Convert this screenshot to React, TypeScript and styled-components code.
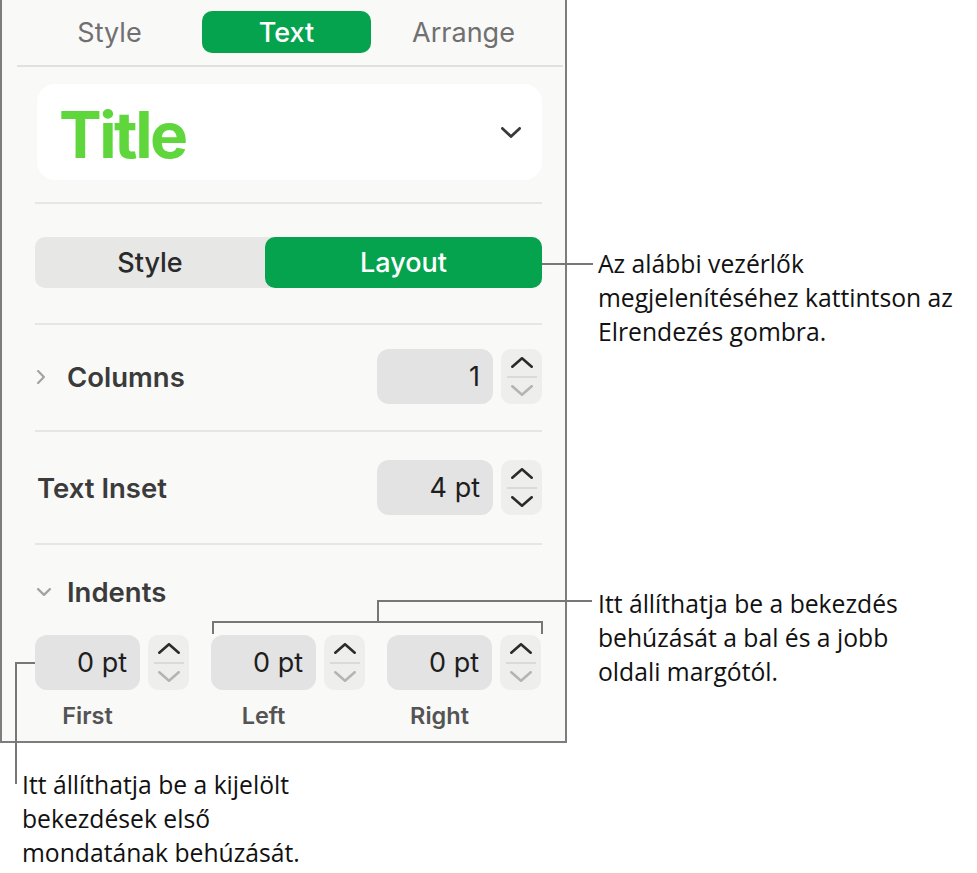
import React from "react";
import styled, { createGlobalStyle } from "styled-components";

const GlobalStyle = createGlobalStyle`
  * {
    box-sizing: border-box;
  }
  body {
    margin: 0;
    background: #ffffff;
    font-family: Inter, "Liberation Sans", sans-serif;
  }
`;

const colorGreen = "#06a34f";

const Canvas = styled.div`
  position: relative;
  width: 977px;
  height: 873px;
  overflow: hidden;
`;

const TopRow = styled.div`
  display: flex;
  align-items: flex-start;
`;

const Panel = styled.div`
  width: 567px;
  height: 743px;
  flex-shrink: 0;
  background: #f9f9f8;
  border: 2px solid #7d7d7d;
  border-top: none;
  display: flex;
  flex-direction: column;
`;

const TabBar = styled.div`
  display: grid;
  grid-template-columns: repeat(3, 177px);
  padding: 11px 0 0 19px;
  height: 65px;
`;

const Tab = styled.div<{ $active?: boolean }>`
  height: 42px;
  margin: 0 4px;
  border-radius: 10px;
  display: flex;
  align-items: center;
  justify-content: center;
  font-size: 27px;
  font-weight: ${({ $active }) => ($active ? 500 : 400)};
  color: ${({ $active }) => ($active ? "#ffffff" : "#707070")};
  background: ${({ $active }) => ($active ? colorGreen : "transparent")};
`;

const TabLine = styled.div`
  height: 2px;
  background: #e1e1e1;
  margin: 0 2px 0 15px;
`;

const Body = styled.div`
  display: flex;
  flex-direction: column;
  padding: 0 23px 0 33px;
`;

const Divider = styled.div<{ $top: number }>`
  height: 2px;
  background: #e6e6e5;
  margin-top: ${({ $top }) => $top}px;
`;

const TitleCard = styled.div`
  margin-top: 17px;
  margin-left: 2px;
  height: 96px;
  background: #ffffff;
  border-radius: 18px;
  display: flex;
  align-items: center;
  justify-content: space-between;
  padding: 0 21px 0 22px;
`;

const TitleText = styled.div`
  font-size: 64px;
  font-weight: 700;
  color: #5fd63c;
  letter-spacing: -2.5px;
  padding-top: 4px;
`;

const Segmented = styled.div`
  margin-top: 33px;
  height: 51px;
  display: grid;
  grid-template-columns: 230px 1fr;
  background: #e7e7e6;
  border-radius: 10px;
`;

const Segment = styled.div<{ $active?: boolean }>`
  display: flex;
  align-items: center;
  justify-content: center;
  border-radius: 10px;
  font-size: 27px;
  font-weight: 500;
  color: ${({ $active }) => ($active ? "#ffffff" : "#2a2a2a")};
  background: ${({ $active }) => ($active ? colorGreen : "transparent")};
`;

const Row = styled.div<{ $top: number }>`
  margin-top: ${({ $top }) => $top}px;
  height: 55px;
  display: flex;
  align-items: center;
`;

const RowLabel = styled.div`
  flex: 1;
  display: flex;
  align-items: center;
  font-size: 27.5px;
  font-weight: 600;
  color: #3b3b3b;
  padding-left: 2px;
`;

const Disclosure = styled.span`
  width: 30px;
  display: inline-flex;
  align-items: center;
`;

const StepGroup = styled.div`
  display: flex;
  gap: 8px;
`;

const Field = styled.div<{ $width: number }>`
  width: ${({ $width }) => $width}px;
  height: 55px;
  border-radius: 12px;
  background: #e3e3e3;
  display: flex;
  align-items: center;
  justify-content: flex-end;
  padding-right: 13px;
  font-size: 27px;
  color: #1e1e1e;
`;

const Stepper = styled.div`
  width: 41px;
  height: 55px;
  border-radius: 10px;
  background: #eeeeed;
  display: flex;
  flex-direction: column;
  align-items: center;
  justify-content: center;
`;

const StepHalf = styled.div`
  height: 26px;
  display: flex;
  align-items: center;
  justify-content: center;
`;

const StepRule = styled.div`
  width: 30px;
  height: 2px;
  background: #dadad9;
`;

const IndentsHeader = styled.div`
  margin-top: 32px;
  height: 30px;
  display: flex;
  align-items: center;
  font-size: 27.5px;
  font-weight: 600;
  color: #3b3b3b;
  padding-left: 2px;
`;

const IndentGrid = styled.div`
  margin-top: 28px;
  display: grid;
  grid-template-columns: repeat(3, 155px);
  column-gap: 21px;
`;

const IndentCell = styled.div`
  display: flex;
  flex-direction: column;
  gap: 13px;
`;

const IndentLabel = styled.div`
  width: 105px;
  text-align: center;
  font-size: 23.5px;
  font-weight: 600;
  color: #545454;
  line-height: 26px;
`;

const CalloutColumn = styled.div`
  padding-left: 31px;
  display: flex;
  flex-direction: column;
`;

const Callout = styled.div<{ $top: number; $left?: number }>`
  margin-top: ${({ $top }) => $top}px;
  margin-left: ${({ $left }) => $left ?? 0}px;
  font-family: "Open Sans", "Noto Sans", sans-serif;
  font-size: 24.7px;
  line-height: 34px;
  color: #111111;
  white-space: nowrap;
`;

const Leaders = styled.svg`
  position: absolute;
  inset: 0;
  pointer-events: none;
`;

type ChevronProps = {
  readonly dir: "up" | "down" | "right";
  readonly color: string;
  readonly w?: number;
  readonly h?: number;
  readonly stroke?: number;
};

const Chevron = ({ dir, color, w = 22, h = 11, stroke = 2.6 }: ChevronProps) => {
  const s = stroke / 2;
  let points = "";
  if (dir === "up") points = `${s},${h - s} ${w / 2},${s} ${w - s},${h - s}`;
  if (dir === "down") points = `${s},${s} ${w / 2},${h - s} ${w - s},${s}`;
  if (dir === "right") points = `${s},${s} ${w - s},${h / 2} ${s},${h - s}`;
  return (
    <svg width={w} height={h} viewBox={`0 0 ${w} ${h}`}>
      <polyline
        points={points}
        fill="none"
        stroke={color}
        strokeWidth={stroke}
        strokeLinecap="round"
        strokeLinejoin="round"
      />
    </svg>
  );
};

const StepButtons = ({ downDisabled }: { readonly downDisabled?: boolean }) => (
  <Stepper>
    <StepHalf>
      <Chevron dir="up" color="#2b2b2b" />
    </StepHalf>
    <StepRule />
    <StepHalf>
      <Chevron dir="down" color={downDisabled ? "#b4b4b4" : "#2b2b2b"} />
    </StepHalf>
  </Stepper>
);

const indents = [
  { label: "First", value: "0 pt" },
  { label: "Left", value: "0 pt" },
  { label: "Right", value: "0 pt" },
];

const App = () => {
  return (
    <Canvas>
      <GlobalStyle />
      <TopRow>
        <Panel>
          <TabBar>
            <Tab>Style</Tab>
            <Tab $active>Text</Tab>
            <Tab>Arrange</Tab>
          </TabBar>
          <TabLine />
          <Body>
            <TitleCard>
              <TitleText>Title</TitleText>
              <Chevron dir="down" color="#3a3a3a" w={20} h={11} stroke={2.8} />
            </TitleCard>
            <Divider $top={22} />
            <Segmented>
              <Segment>Style</Segment>
              <Segment $active>Layout</Segment>
            </Segmented>
            <Divider $top={35} />
            <Row $top={24}>
              <RowLabel>
                <Disclosure>
                  <Chevron dir="right" color="#a3a3a3" w={8} h={14} stroke={2.2} />
                </Disclosure>
                Columns
              </RowLabel>
              <StepGroup>
                <Field $width={116}>1</Field>
                <StepButtons downDisabled />
              </StepGroup>
            </Row>
            <Divider $top={26} />
            <Row $top={28}>
              <RowLabel>Text Inset</RowLabel>
              <StepGroup>
                <Field $width={116}>4 pt</Field>
                <StepButtons />
              </StepGroup>
            </Row>
            <Divider $top={28} />
            <IndentsHeader>
              <Disclosure>
                <Chevron dir="down" color="#a3a3a3" w={14} h={8} stroke={2.2} />
              </Disclosure>
              Indents
            </IndentsHeader>
            <IndentGrid>
              {indents.map((item) => (
                <IndentCell key={item.label}>
                  <StepGroup>
                    <Field $width={105}>{item.value}</Field>
                    <StepButtons downDisabled />
                  </StepGroup>
                  <IndentLabel>{item.label}</IndentLabel>
                </IndentCell>
              ))}
            </IndentGrid>
          </Body>
        </Panel>
        <CalloutColumn>
          <Callout $top={247}>
            Az alábbi vezérlők
            <br />
            megjelenítéséhez kattintson az
            <br />
            Elrendezés gombra.
          </Callout>
          <Callout $top={238}>
            Itt állíthatja be a bekezdés
            <br />
            behúzását a bal és a jobb
            <br />
            oldali margótól.
          </Callout>
        </CalloutColumn>
      </TopRow>
      <Callout $top={25} $left={22}>
        Itt állíthatja be a kijelölt
        <br />
        bekezdések első
        <br />
        mondatának behúzását.
      </Callout>
      <Leaders width={977} height={873} viewBox="0 0 977 873">
        <g fill="none" stroke="#777777" strokeWidth={2}>
          <path d="M542,264 H593" />
          <path d="M213,634 V622 H542 V634" />
          <path d="M378,622 V601 H592" />
          <path d="M35,663 H16 V784" />
        </g>
      </Leaders>
    </Canvas>
  );
};

export default App;
